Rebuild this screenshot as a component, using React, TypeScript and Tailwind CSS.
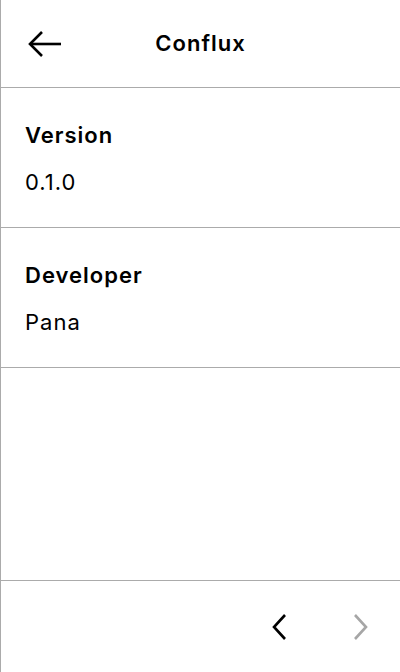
const Row = ({ label, value }: { label: string; value: string }) => (
  <div className="h-[140px] border-b border-[#ababab] px-6 pt-[31px]">
    <div className="text-[22px] font-semibold leading-[32px] tracking-[1px] text-black">{label}</div>
    <div className="mt-[15px] text-[22px] leading-[32px] tracking-[1px] text-black">{value}</div>
  </div>
);

export default function App() {
  return (
    <div
      className="flex h-[672px] w-[400px] flex-col border-l border-[#ababab] bg-white"
      style={{ fontFamily: 'Inter, "Noto Sans", sans-serif' }}
    >
      <div className="relative flex h-[88px] shrink-0 items-center justify-center border-b border-[#ababab]">
        <svg
          className="absolute left-[27px] top-[30px]"
          width="33"
          height="28"
          viewBox="0 0 33 28"
          fill="none"
          stroke="black"
          strokeWidth="2.6"
        >
          <path d="M33 14H3" />
          <path d="M14 2L2 14l12 12" />
        </svg>
        <span className="text-[22px] font-semibold tracking-[1px] text-black">Conflux</span>
      </div>
      <Row label="Version" value="0.1.0" />
      <Row label="Developer" value="Pana" />
      <div className="flex-1 border-b border-[#ababab]" />
      <div className="flex h-[91px] shrink-0 items-center justify-end gap-[68px] pr-[32px]">
        <svg width="14" height="26" viewBox="0 0 14 26" fill="none" stroke="black" strokeWidth="2.6">
          <path d="M13 1L2 13l11 12" />
        </svg>
        <svg width="14" height="26" viewBox="0 0 14 26" fill="none" stroke="#a6a6a6" strokeWidth="2.6">
          <path d="M1 1l11 12L1 25" />
        </svg>
      </div>
    </div>
  );
}
